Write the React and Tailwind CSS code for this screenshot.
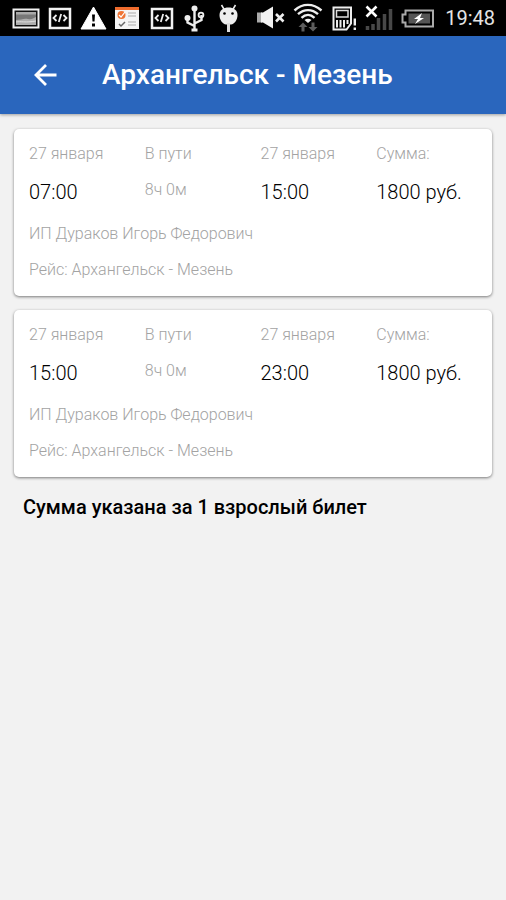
const trips = [
  {
    departDate: '27 января',
    departTime: '07:00',
    duration: '8ч 0м',
    arriveDate: '27 января',
    arriveTime: '15:00',
    price: '1800 руб.',
    carrier: 'ИП Дураков Игорь Федорович',
    route: 'Рейс: Архангельск - Мезень',
  },
  {
    departDate: '27 января',
    departTime: '15:00',
    duration: '8ч 0м',
    arriveDate: '27 января',
    arriveTime: '23:00',
    price: '1800 руб.',
    carrier: 'ИП Дураков Игорь Федорович',
    route: 'Рейс: Архангельск - Мезень',
  },
];

function StatusIcon({ width = 34, children }) {
  return (
    <svg width={width} height="36" viewBox={`0 0 ${width} 36`} fill="none" className="shrink-0" aria-hidden="true">
      {children}
    </svg>
  );
}

function ImageIcon() {
  return (
    <StatusIcon>
      <path d="M4.500 9.500h25v18h-25z" fill="#111" stroke="#f2f2f2" strokeWidth="2" />
      <path d="M7 12h20v13H7z" fill="#777" />
      <path d="M7 12h20v2.500H7z" fill="#aaa" />
      <path d="M7 20c5 0 8-2 12-1s5-1 8-2v8H7z" fill="#aeaeae" />
      <path d="M7 22c5-1 9 1 20-1" stroke="#dedede" />
    </StatusIcon>
  );
}

function CodeIcon() {
  return (
    <StatusIcon>
      <path d="M7 9h20v19H7z" stroke="#f2f2f2" strokeWidth="2.500" />
      <path d="M13.500 15 10.500 18l3 3M20.500 15l3 3-3 3M18.200 14l-2.400 8" stroke="#eee" strokeWidth="1.800" />
    </StatusIcon>
  );
}

function WarningIcon() {
  return (
    <StatusIcon>
      <path d="M16.500 7 29 29H4z" fill="#fff" stroke="#fff" strokeLinejoin="round" />
      <path d="M15 14.500h3l-.5 7h-2z" fill="#000" />
      <path d="M15 23.500h3v3h-3z" fill="#000" />
    </StatusIcon>
  );
}

function ChecklistIcon() {
  return (
    <StatusIcon>
      <path d="M4 7h24v22H4z" fill="#f4f4f4" />
      <path d="M4 7h24v3H4z" fill="#ef6c2d" />
      <circle cx="10.500" cy="15" r="4" fill="#ef7434" />
      <path d="m8 15 2 2 4-5" stroke="#fff" strokeWidth="1.200" />
      <path d="m8 24 2 2 4-4" stroke="#666" strokeWidth="1.500" />
      <path d="M17 13h8M17 16h8M17 22h8M17 25h8" stroke="#aaa" strokeWidth="1.200" />
    </StatusIcon>
  );
}

function UsbIcon() {
  return (
    <StatusIcon>
      <path d="M15.500 9v20M15.500 26l-7-3.500V18M15.500 23.500l7-3.500V15" stroke="#eee" strokeWidth="2.400" />
      <circle cx="15.500" cy="8.500" r="3" fill="#eee" />
      <circle cx="8.500" cy="18" r="3" fill="#eee" />
      <circle cx="22" cy="15" r="2.400" stroke="#eee" strokeWidth="1.800" />
      <path d="M12.500 28.500h6v3h-6z" fill="#eee" />
    </StatusIcon>
  );
}

function AndroidIcon() {
  return (
    <StatusIcon>
      <path d="m8.500 5 3 5M22.500 5l-3 5" stroke="#eee" strokeWidth="1.500" />
      <path d="M6.500 15c0-5 4-7.500 9-7.500s9 2.500 9 7.500-3 9-6.500 9.500h-5C9.500 24 6.500 20 6.500 15z" fill="#eee" />
      <path d="M15.500 23v9" stroke="#ddd" strokeWidth="3" />
      <circle cx="11.500" cy="13.500" r="1.300" fill="#000" />
      <circle cx="19.500" cy="13.500" r="1.300" fill="#000" />
    </StatusIcon>
  );
}

function MuteIcon() {
  return (
    <StatusIcon width={36}>
      <path d="M5 12.500h5v10H5z" fill="#aaa" />
      <path d="M9 12.500h2l10-6v22l-10-6H9z" fill="#f2f2f2" />
      <path d="m24 14 7.500 7.500M31.500 14 24 21.500" stroke="#eee" strokeWidth="2.600" />
    </StatusIcon>
  );
}

function WifiIcon() {
  return (
    <StatusIcon width={36}>
      <path d="M6.500 10.500c8-7.500 18.500-7.500 27 0M10 14.200c6-5.500 14-5.500 20 0M13.500 17.800c4-3.800 9-3.800 13 0" stroke="#eee" strokeWidth="2.400" />
      <path d="M16.500 20c2-1.800 5-1.800 7 0L20 23z" fill="#eee" />
      <path d="m15 22.500-4.500 4.500h3v4.500h3V27h3zM25 31.500l4.500-4.500h-3v-4.500h-3V27h-3z" fill="#5c5c5c" />
    </StatusIcon>
  );
}

function SimIcon() {
  return (
    <StatusIcon width={36}>
      <path d="M9.500 7.500H27v16l-4.500 6h-13z" stroke="#eee" strokeWidth="2" />
      <path d="M12.500 10.500H24V17H12.500z" stroke="#ddd" strokeWidth="1.500" />
      <path d="M13 20v7.500M16.500 20v7.500M20 20v7.500M23.500 20v4" stroke="#eee" strokeWidth="2" />
      <path d="M30.800 18.500v7M30.800 27.500V30" stroke="#eee" strokeWidth="2.400" />
    </StatusIcon>
  );
}

function SignalIcon() {
  return (
    <StatusIcon width={36}>
      <path d="M7.500 30v-4M13 30v-6M18.500 30V18M24.500 30V14M30.500 30V9" stroke="#484848" strokeWidth="3.500" />
      <path d="m6.500 6.500 10 10M16.500 6.500l-10 10" stroke="#fff" strokeWidth="2.600" />
    </StatusIcon>
  );
}

function BatteryIcon() {
  return (
    <StatusIcon width={38}>
      <path d="M9.500 10.500H37v16H9.500v-4h-3v-8h3z" stroke="#aaa" strokeWidth="2" />
      <path d="M12.500 13.500H34v10H12.500z" fill="#555" />
      <path d="m26 13-8 6h4l-3 5 9-6h-4z" fill="#fff" />
    </StatusIcon>
  );
}

function StatusBar() {
  return (
    <div className="flex h-9 items-center justify-between bg-black pr-[11px] pl-[9px]">
      <div className="flex">
        <ImageIcon />
        <CodeIcon />
        <WarningIcon />
        <ChecklistIcon />
        <CodeIcon />
        <UsbIcon />
        <AndroidIcon />
      </div>
      <div className="flex items-center">
        <MuteIcon />
        <WifiIcon />
        <SimIcon />
        <SignalIcon />
        <BatteryIcon />
        <time className="ml-[11px] text-[20px] leading-6 text-[#e4e4e4]">19:48</time>
      </div>
    </div>
  );
}

function AppBar() {
  return (
    <header className="relative flex h-[78px] items-center bg-[#2a66bd] pl-[30px] shadow-[0_1px_3px_rgba(0,0,0,0.35)]">
      <button type="button" aria-label="Назад" className="text-white">
        <svg width="30" height="30" viewBox="0 0 30 30" fill="none" aria-hidden="true">
          <path d="M26.500 15H6.500M16 5 6 15l10 10" stroke="currentColor" strokeWidth="2.800" />
        </svg>
      </button>
      <h1 className="ml-[42px] text-[28px] leading-8 font-medium text-white">Архангельск - Мезень</h1>
    </header>
  );
}

function Cell({ label, value, muted }) {
  return (
    <div>
      <dt className="text-[16px] leading-5 font-light text-[#a3a3a3]">{label}</dt>
      <dd className={muted ? 'mt-4 text-[16px] leading-5 font-light text-[#a3a3a3]' : 'mt-4 text-[20px] leading-6 font-light text-black'}>
        {value}
      </dd>
    </div>
  );
}

function TripCard({ trip }) {
  return (
    <li className="rounded-[5px] bg-white pt-[15px] pb-4 pl-[15px] shadow-[0_1px_3px_rgba(0,0,0,0.5)]">
      <dl className="grid grid-cols-4">
        <Cell label={trip.departDate} value={trip.departTime} />
        <Cell label="В пути" value={trip.duration} muted />
        <Cell label={trip.arriveDate} value={trip.arriveTime} />
        <Cell label="Сумма:" value={trip.price} />
      </dl>
      <p className="mt-5 text-[16px] leading-5 font-light text-[#a3a3a3]">{trip.carrier}</p>
      <p className="mt-4 text-[16px] leading-5 font-light text-[#a3a3a3]">{trip.route}</p>
    </li>
  );
}

export default function App() {
  return (
    <div className="min-h-screen bg-[#f2f2f2] font-[Roboto,sans-serif]">
      <StatusBar />
      <AppBar />
      <main className="px-[14px] pt-[15px]">
        <ul className="flex flex-col gap-[14px]">
          {trips.map((trip) => (
            <TripCard key={trip.departTime} trip={trip} />
          ))}
        </ul>
        <p className="mt-[18px] pl-[9px] text-[20px] leading-6 font-medium text-black">
          Сумма указана за 1 взрослый билет
        </p>
      </main>
    </div>
  );
}
